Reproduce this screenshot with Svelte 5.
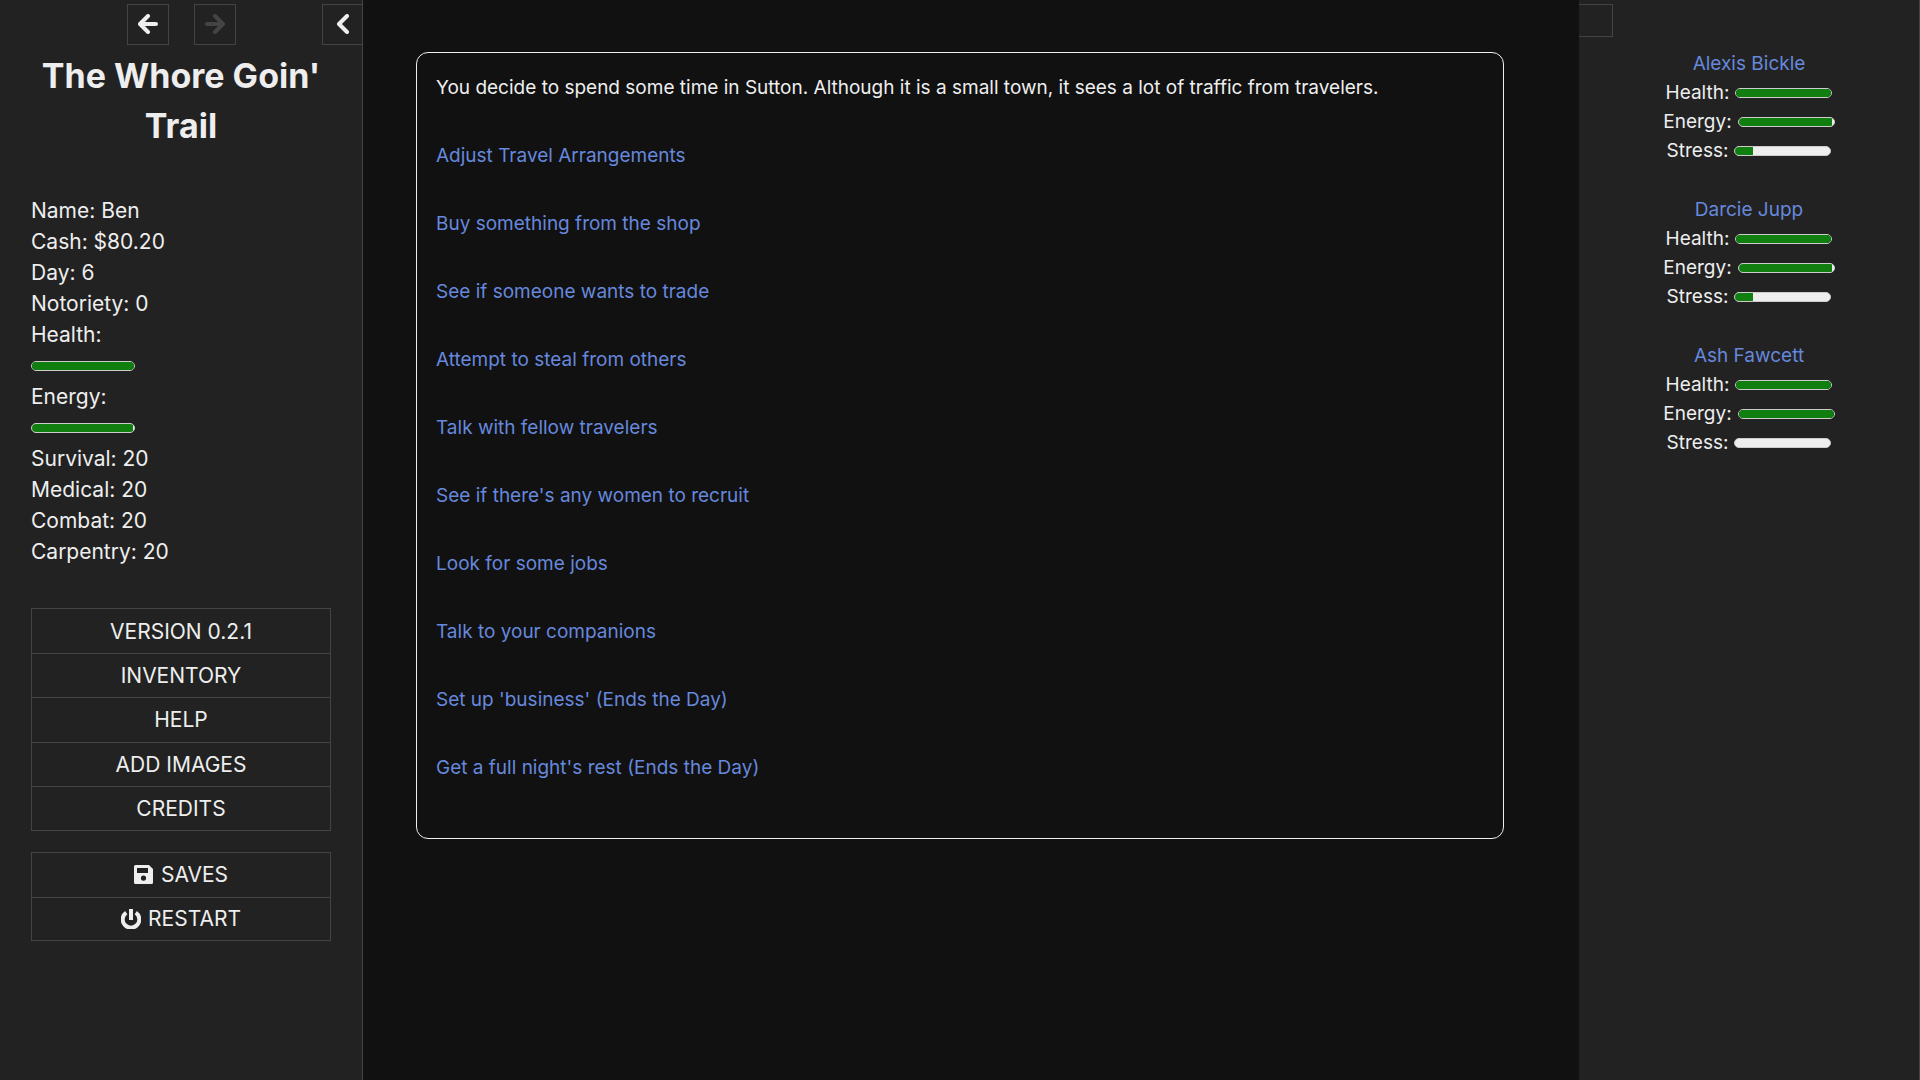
<script lang="ts">
	type Member = { name: string; health: number; energy: number; stress: number };

	const stats = [
		{ label: 'Name', value: 'Ben' },
		{ label: 'Cash', value: '$80.20' },
		{ label: 'Day', value: '6' },
		{ label: 'Notoriety', value: '0' }
	];

	const bars = [
		{ label: 'Health', value: 100 },
		{ label: 'Energy', value: 99 }
	];

	const skills = [
		{ label: 'Survival', value: 20 },
		{ label: 'Medical', value: 20 },
		{ label: 'Combat', value: 20 },
		{ label: 'Carpentry', value: 20 }
	];

	const menu = ['Version 0.2.1', 'Inventory', 'Help', 'Add Images', 'Credits'];

	const choices = [
		'Adjust Travel Arrangements',
		'Buy something from the shop',
		'See if someone wants to trade',
		'Attempt to steal from others',
		'Talk with fellow travelers',
		"See if there's any women to recruit",
		'Look for some jobs',
		'Talk to your companions',
		"Set up 'business' (Ends the Day)",
		"Get a full night's rest (Ends the Day)"
	];

	const party: Member[] = [
		{ name: 'Alexis Bickle', health: 100, energy: 98, stress: 18 },
		{ name: 'Darcie Jupp', health: 100, energy: 98, stress: 18 },
		{ name: 'Ash Fawcett', health: 100, energy: 100, stress: 0 }
	];

	const vitals = (m: Member) => [
		{ label: 'Health', value: m.health },
		{ label: 'Energy', value: m.energy },
		{ label: 'Stress', value: m.stress }
	];
</script>

{#snippet bar(label: string, value: number)}
	<span class="bar" role="meter" aria-label={label} aria-valuenow={value} aria-valuemin="0" aria-valuemax="100">
		<span class="fill" style="width: {value}%"></span>
	</span>
{/snippet}

<div class="page">
	<aside class="left">
		<div class="tray">
			<div class="history">
				<button aria-label="Back">
					<svg viewBox="0 0 20 20"><path d="M18 10H3M10 2L2 10L10 18" /></svg>
				</button>
				<button aria-label="Forward" disabled>
					<svg viewBox="0 0 20 20"><path d="M2 10H17M10 2L18 10L10 18" /></svg>
				</button>
			</div>
			<button class="toggle" aria-label="Toggle the sidebar">
				<svg viewBox="0 0 20 20"><path d="M14 2L6 10L14 18" /></svg>
			</button>
		</div>

		<div class="body">
			<h1>The Whore Goin' Trail</h1>

			<div class="stats">
				{#each stats as s}<div>{s.label}: {s.value}</div>{/each}
				{#each bars as b}
					<div>{b.label}:</div>
					<div class="bar-row">{@render bar(b.label, b.value)}</div>
				{/each}
				{#each skills as s}<div>{s.label}: {s.value}</div>{/each}
			</div>

			<ul class="menu story">
				{#each menu as item}<li><button>{item}</button></li>{/each}
			</ul>
			<ul class="menu core">
				<li>
					<button>
						<svg class="icon" viewBox="0 0 20 20" aria-hidden="true">
							<path fill-rule="evenodd" d="M2 0H15L19 4V17.500Q19 19 17.500 19H1.500Q0 19 0 17.500V1.500Q0 0 1.500 0ZM3 3V8H14V3ZM9.500 10.500A2.600 2.600 0 1 0 9.500 15.700A2.600 2.600 0 1 0 9.500 10.500Z" />
						</svg>
						Saves
					</button>
				</li>
				<li>
					<button>
						<svg class="icon power" viewBox="0 0 20 20" aria-hidden="true">
							<path d="M5.200 3.600A8.300 8.300 0 1 0 14.800 3.600M10 0V11" />
						</svg>
						Restart
					</button>
				</li>
			</ul>
		</div>
	</aside>

	<main>
		<section class="passage">
			<p>You decide to spend some time in Sutton. Although it is a small town, it sees a lot of traffic from travelers.</p>
			{#each choices as c}
				<p><a href="#top">{c}</a></p>
			{/each}
		</section>
	</main>

	<aside class="right">
		<button class="stub" aria-label="Toggle the party panel"></button>
		<div class="party">
			{#each party as m (m.name)}
				<div class="member">
					<a href="#top">{m.name}</a>
					{#each vitals(m) as v}
						<div class="vital"><span>{v.label}:</span>{@render bar(v.label, v.value)}</div>
					{/each}
				</div>
			{/each}
		</div>
	</aside>
</div>

<style>
	:global(body) {
		margin: 0;
		background: #111;
		color: #eee;
		font-family: Inter, sans-serif;
		font-size: 19px;
	}
	.page {
		display: flex;
		min-height: 100vh;
	}
	a {
		color: #68d;
		text-decoration: none;
	}
	a:hover {
		color: #8af;
		text-decoration: underline;
	}
	button {
		box-sizing: border-box;
		border: 1px solid #444;
		background: transparent;
		color: #eee;
		font: inherit;
		padding: 0;
		cursor: pointer;
	}
	button:hover {
		background: #333;
	}
	button:disabled {
		color: #444;
		background: transparent;
		cursor: default;
	}

	.left,
	.right {
		box-sizing: border-box;
		flex: none;
		background: #222;
		border-right: 1px solid #444;
	}
	.left {
		width: 363px;
		font-size: 21px;
	}
	.tray {
		display: grid;
		grid-template-columns: 1fr auto 1fr;
		padding-top: 4px;
	}
	.history {
		grid-column: 2;
		display: flex;
		gap: 25px;
	}
	.tray button {
		display: flex;
		align-items: center;
		justify-content: center;
		width: 42px;
		height: 41px;
		padding-bottom: 2px;
	}
	.tray svg {
		width: 20px;
		height: 20px;
		fill: none;
		stroke: currentColor;
		stroke-width: 4;
		stroke-linecap: round;
		stroke-linejoin: round;
	}
	.tray .toggle {
		justify-self: end;
		width: 40px;
		border-right: 0;
	}
	.body {
		padding: 6px 31px;
	}
	h1 {
		margin: 0 0 44px;
		font-size: 34px;
		line-height: 50px;
		font-weight: 700;
		text-align: center;
	}
	.stats {
		margin-bottom: 41px;
		line-height: 31px;
	}
	.bar-row {
		display: flex;
		align-items: center;
		height: 31px;
	}
	.bar {
		display: block;
		box-sizing: border-box;
		width: 97px;
		height: 10px;
		border: 1px solid #ccc;
		border-radius: 5px;
		background: #eee;
		overflow: hidden;
	}
	.bar-row .bar {
		width: 104px;
	}
	.fill {
		display: block;
		height: 100%;
		background: #107f10;
	}

	.menu {
		box-sizing: border-box;
		display: grid;
		grid-auto-rows: 1fr;
		list-style: none;
		margin: 0 0 21px;
		padding: 0;
		border: 1px solid #444;
	}
	.story {
		height: 223px;
	}
	.core {
		height: 89px;
	}
	.menu li + li {
		border-top: 1px solid #444;
	}
	.menu button {
		display: flex;
		align-items: center;
		justify-content: center;
		gap: 7px;
		width: 100%;
		height: 100%;
		border: 0;
		text-transform: uppercase;
	}
	.icon {
		width: 20px;
		height: 20px;
		fill: currentColor;
	}
	.power {
		fill: none;
		stroke: currentColor;
		stroke-width: 4;
	}

	main {
		flex: 1;
		min-width: 0;
		padding: 52px 75px 52px 53px;
	}
	.passage {
		border: 1px solid #eee;
		border-radius: 12px;
		padding: 18px 19px 53px;
		line-height: 34px;
	}
	.passage p {
		margin: 0 0 34px;
	}
	.passage p:last-child {
		margin-bottom: 0;
	}

	.right {
		width: 341px;
		padding-top: 4px;
	}
	.stub {
		display: block;
		width: 34px;
		height: 33px;
		border-left: 0;
	}
	.party {
		display: flex;
		flex-direction: column;
		gap: 30px;
		padding-top: 12px;
		line-height: 29px;
	}
	.member {
		display: flex;
		flex-direction: column;
		align-items: center;
	}
	.vital {
		display: flex;
		align-items: center;
		gap: 6px;
	}
</style>
